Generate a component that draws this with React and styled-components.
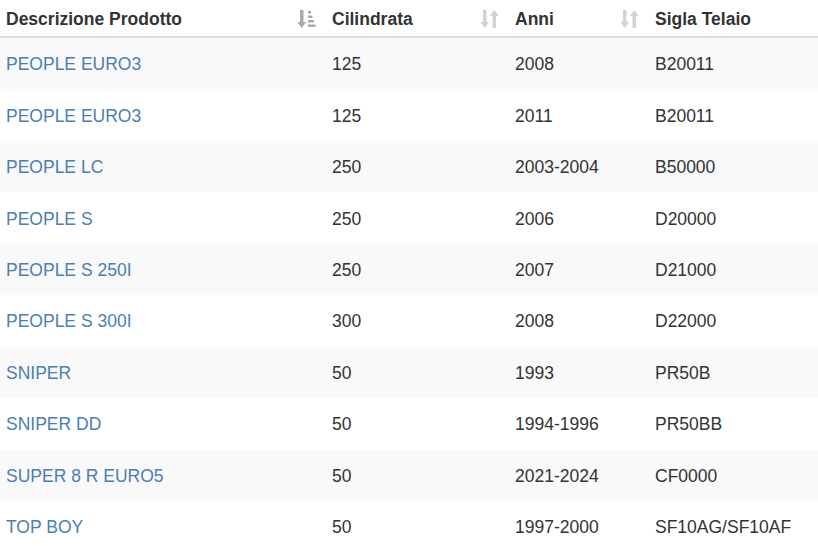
import React from "react";
import styled, { createGlobalStyle } from "styled-components";

const GlobalStyle = createGlobalStyle`
  html, body {
    margin: 0;
    padding: 0;
    background: #fff;
  }
  body {
    font-family: "Liberation Sans", Arial, sans-serif;
    font-size: 17.5px;
    color: #333;
  }
`;

const Table = styled.div`
  width: 818px;
  display: flex;
  flex-direction: column;
`;

const cols = "326px 183px 140px 1fr";

const HeadRow = styled.div`
  display: grid;
  grid-template-columns: ${cols};
  height: 36px;
  border-bottom: 2px solid #ddd;
`;

const HeadCell = styled.div`
  display: flex;
  align-items: center;
  justify-content: space-between;
  padding: 2px 10px 0 6px;
  font-weight: bold;
  color: #333;
`;

const Row = styled.div`
  display: grid;
  grid-template-columns: ${cols};
  height: 51.44px;
  background: ${(p) => (p.$striped ? "#f9f9f9" : "#fff")};
`;

const Cell = styled.div`
  display: flex;
  align-items: center;
  padding: 2px 6px 0;
  color: #333;
  white-space: nowrap;
`;

const Link = styled.a`
  color: #4a7fb2;
  text-decoration: none;
`;

const SortIcon = styled.svg`
  width: 19px;
  height: 20px;
  flex-shrink: 0;
`;

const SortBoth = () => (
  <SortIcon viewBox="0 0 19 20">
    <g fill="#d3d3d3">
      <rect x="3" y="1" width="3.5" height="13" />
      <polygon points="0.3,13 9.2,13 4.75,19" />
      <rect x="12.5" y="6" width="3.5" height="13" />
      <polygon points="9.8,7 18.7,7 14.25,1" />
    </g>
  </SortIcon>
);

const SortAttr = () => (
  <SortIcon viewBox="0 0 19 20">
    <g fill="#a9a9a9">
      <rect x="3" y="1" width="3.5" height="13" />
      <polygon points="0.3,13 9.2,13 4.75,19" />
      <rect x="11" y="2" width="3" height="2.5" />
      <rect x="11" y="6.5" width="4.5" height="2.5" />
      <rect x="11" y="11" width="6" height="2.5" />
      <rect x="11" y="15.5" width="7.5" height="2.5" />
    </g>
  </SortIcon>
);

const rows = [
  ["PEOPLE EURO3", "125", "2008", "B20011"],
  ["PEOPLE EURO3", "125", "2011", "B20011"],
  ["PEOPLE LC", "250", "2003-2004", "B50000"],
  ["PEOPLE S", "250", "2006", "D20000"],
  ["PEOPLE S 250I", "250", "2007", "D21000"],
  ["PEOPLE S 300I", "300", "2008", "D22000"],
  ["SNIPER", "50", "1993", "PR50B"],
  ["SNIPER DD", "50", "1994-1996", "PR50BB"],
  ["SUPER 8 R EURO5", "50", "2021-2024", "CF0000"],
  ["TOP BOY", "50", "1997-2000", "SF10AG/SF10AF"],
];

export default function App() {
  return (
    <>
      <GlobalStyle />
      <Table>
        <HeadRow>
          <HeadCell>
            Descrizione Prodotto
            <SortAttr />
          </HeadCell>
          <HeadCell>
            Cilindrata
            <SortBoth />
          </HeadCell>
          <HeadCell>
            Anni
            <SortBoth />
          </HeadCell>
          <HeadCell>Sigla Telaio</HeadCell>
        </HeadRow>
        {rows.map((r, i) => (
          <Row key={i} $striped={i % 2 === 0}>
            <Cell>
              <Link href="#">{r[0]}</Link>
            </Cell>
            <Cell>{r[1]}</Cell>
            <Cell>{r[2]}</Cell>
            <Cell>{r[3]}</Cell>
          </Row>
        ))}
      </Table>
    </>
  );
}
